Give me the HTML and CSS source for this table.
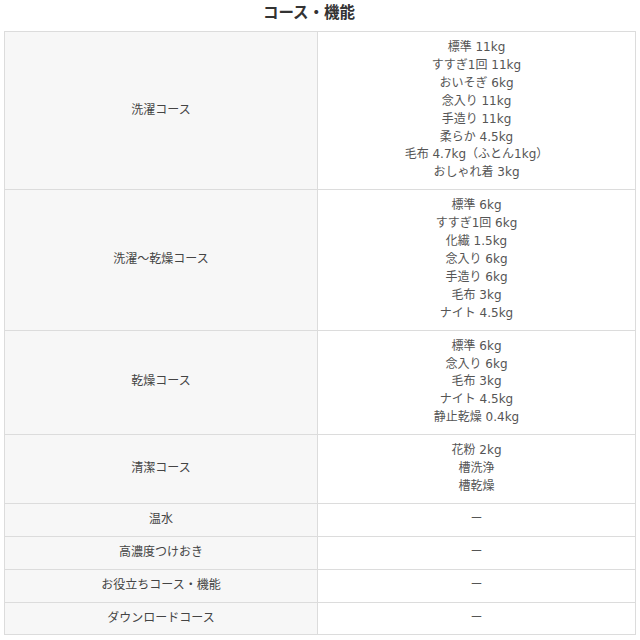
FILE: index.html
```html
<!DOCTYPE html>
<html lang="ja">
<head>
<meta charset="utf-8">
<link rel="stylesheet" href="styles.css">
</head>
<body>
<div class="page">
  <h2 class="title">コース・機能</h2>
  <table class="spec">
    <tbody>
      <tr>
        <th>洗濯コース</th>
        <td>標準 11kg<br>すすぎ1回 11kg<br>おいそぎ 6kg<br>念入り 11kg<br>手造り 11kg<br>柔らか 4.5kg<br>毛布 4.7kg（ふとん1kg）<br>おしゃれ着 3kg</td>
      </tr>
      <tr>
        <th>洗濯～乾燥コース</th>
        <td>標準 6kg<br>すすぎ1回 6kg<br>化繊 1.5kg<br>念入り 6kg<br>手造り 6kg<br>毛布 3kg<br>ナイト 4.5kg</td>
      </tr>
      <tr>
        <th>乾燥コース</th>
        <td>標準 6kg<br>念入り 6kg<br>毛布 3kg<br>ナイト 4.5kg<br>静止乾燥 0.4kg</td>
      </tr>
      <tr>
        <th>清潔コース</th>
        <td>花粉 2kg<br>槽洗浄<br>槽乾燥</td>
      </tr>
      <tr>
        <th>温水</th>
        <td>ー</td>
      </tr>
      <tr>
        <th>高濃度つけおき</th>
        <td>ー</td>
      </tr>
      <tr>
        <th>お役立ちコース・機能</th>
        <td>ー</td>
      </tr>
      <tr>
        <th>ダウンロードコース</th>
        <td>ー</td>
      </tr>
    </tbody>
  </table>
</div>
</body>
</html>
```

FILE: styles.css
```css
html, body {
  margin: 0;
  padding: 0;
  background: #ffffff;
}
.page {
  padding: 0 4px 0 4px;
  font-family: "DejaVu Sans", "Noto Sans CJK JP", sans-serif;
  color: #444;
}
.title {
  margin: 0;
  width: 610px;
  text-align: center;
  font-family: "Noto Sans CJK JP", sans-serif;
  font-size: 15.5px;
  font-weight: bold;
  line-height: 22px;
  color: #333;
  padding-bottom: 9px;
}
.spec {
  width: 632px;
  border-collapse: collapse;
  table-layout: fixed;
  font-size: 12px;
  line-height: 17.9px;
}
.spec th,
.spec td {
  border: 1px solid #dcdcdc;
  padding: 7px 4px;
  text-align: center;
  vertical-align: middle;
  font-weight: normal;
}
.spec th {
  width: 304px;
  background: #f7f7f7;
  color: #444;
}
.spec td {
  background: #ffffff;
  color: #555;
}
```
